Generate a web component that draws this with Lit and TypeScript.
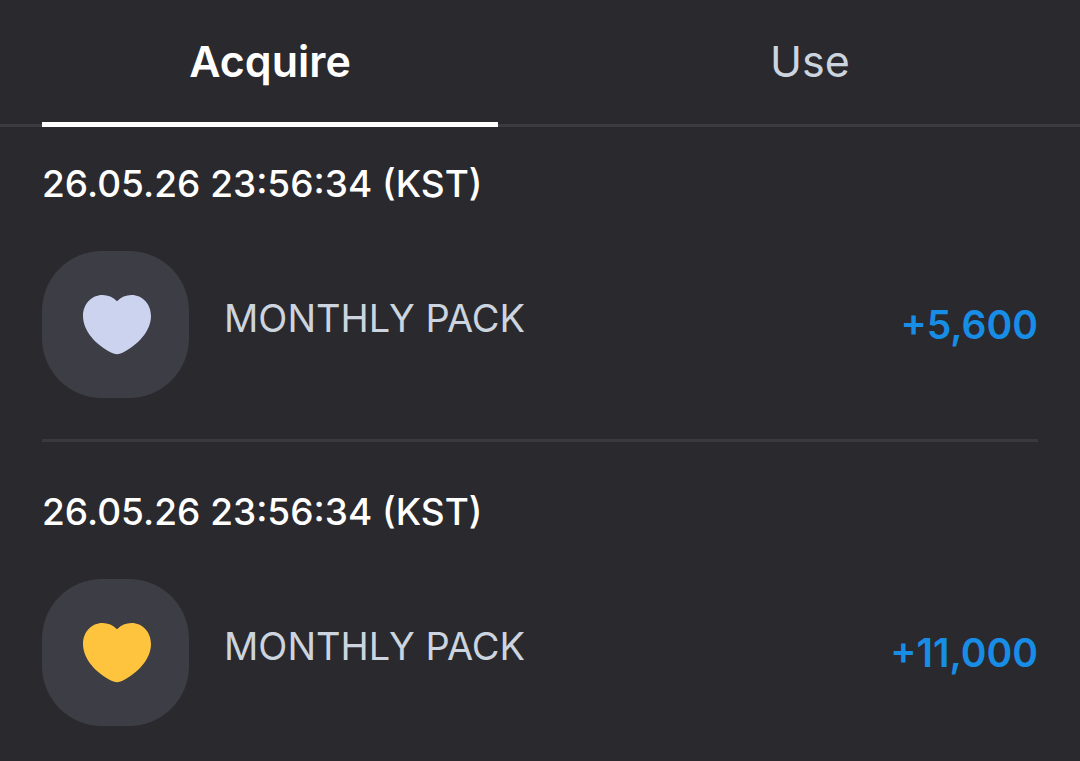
import { LitElement, html, css } from "lit";
import { customElement, state } from "lit/decorators.js";

interface Entry {
  time: string;
  label: string;
  amount: string;
  color: string;
}

@customElement("app-root")
export class AppRoot extends LitElement {
  @state() private tab = "Acquire";

  private entries: Entry[] = [
    { time: "26.05.26 23:56:34 (KST)", label: "MONTHLY PACK", amount: "+5,600", color: "#ccd3ee" },
    { time: "26.05.26 23:56:34 (KST)", label: "MONTHLY PACK", amount: "+11,000", color: "#ffc43d" },
  ];

  static styles = css`
    :host {
      display: block;
      box-sizing: border-box;
      min-height: 100vh;
      background: #2a292d;
      color: #fff;
      font-family: Inter, "Liberation Sans", sans-serif;
    }
    .tabs {
      display: flex;
      padding: 0 42px;
      height: 127px;
      box-sizing: border-box;
      gap: 84px;
      background: linear-gradient(#3c3b41, #3c3b41) 0 124px / 100% 3px no-repeat;
    }
    .tab {
      flex: 1;
      padding: 0;
      border: 0;
      border-bottom: 5px solid transparent;
      background: none;
      color: #ccd5df;
      font: 400 43px/52px Inter, sans-serif;
      cursor: pointer;
    }
    .tab.on {
      color: #fff;
      font-weight: 600;
      border-bottom-color: #fff;
    }
    .list {
      list-style: none;
      margin: 0;
      padding: 0 42px;
    }
    .entry {
      padding: 35px 0 41px;
    }
    .entry + .entry {
      border-top: 3px solid #3a3940;
      padding-top: 48px;
    }
    .time {
      display: block;
      font-size: 37px;
      line-height: 44px;
      font-weight: 500;
    }
    .row {
      display: flex;
      align-items: center;
      gap: 35px;
      margin-top: 45px;
    }
    .badge {
      width: 147px;
      height: 147px;
      border-radius: 60px;
      background: #3d3d45;
    }
    .heart {
      display: block;
      width: 100%;
      height: 100%;
    }
    .label {
      flex: 1;
      font-size: 38px;
      line-height: 46px;
      padding-bottom: 14px;
      color: #ccd5df;
    }
    .amount {
      font-size: 39px;
      line-height: 46px;
      font-weight: 600;
      color: #188de6;
    }
  `;

  render() {
    return html`
      <nav class="tabs" role="tablist">
        ${["Acquire", "Use"].map(
          (name) => html`<button
            class="tab ${this.tab === name ? "on" : ""}"
            role="tab"
            aria-selected=${this.tab === name}
            @click=${() => (this.tab = name)}
          >${name}</button>`
        )}
      </nav>
      <ul class="list">
        ${this.entries.map(
          (e) => html`<li class="entry">
            <time class="time">${e.time}</time>
            <div class="row">
              <span class="badge">
                <svg class="heart" viewBox="0 0 147 147" fill=${e.color} aria-hidden="true">
                  <path d="M75 50.300C71 46 66 44 60.500 44C49.500 44 41 53 41 65C41 80 54 94 69.500 101.800Q75 104.600 80.500 101.800C96 94 109 80 109 65C109 53 100.500 44 89.500 44C84 44 79 46 75 50.300Z" />
                </svg>
              </span>
              <span class="label">${e.label}</span>
              <span class="amount">${e.amount}</span>
            </div>
          </li>`
        )}
      </ul>
    `;
  }
}
